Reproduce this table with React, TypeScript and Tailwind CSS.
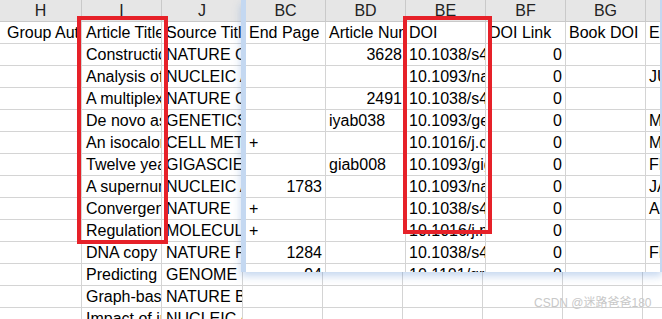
import React from 'react';

type Cell = { v: string; num?: boolean };

const BG_COLS = [82, 80, 81, 80, 80, 80, 80, 80, 80];
const BG_LETTERS = ['H', 'I', 'J', 'K', 'L', 'M', 'N', 'O', 'P'];

const BG_ROWS: string[][] = [
  ['Group Author', 'Article Title', 'Source Title'],
  ['', 'Construction of a high-density', 'NATURE COMMUNICATIONS'],
  ['', 'Analysis of', 'NUCLEIC ACIDS RESEARCH'],
  ['', 'A multiplexed', 'NATURE COMMUNICATIONS'],
  ['', 'De novo assembly', 'GENETICS'],
  ['', 'An isocaloric diet', 'CELL METABOLISM'],
  ['', 'Twelve years of', 'GIGASCIENCE'],
  ['', 'A supernumerary', 'NUCLEIC ACIDS RESEARCH'],
  ['', 'Convergent evolution', 'NATURE'],
  ['', 'Regulation of', 'MOLECULAR CELL'],
  ['', 'DNA copy number', 'NATURE PLANTS'],
  ['', 'Predicting', 'GENOME RESEARCH'],
  ['', 'Graph-based', 'NATURE BIOTECHNOLOGY'],
  ['', 'Impact of inbreeding', 'NUCLEIC ACIDS RESEARCH'],
];

const OV_COLS = [80, 80, 80, 80, 80, 80];
const OV_LETTERS = ['BC', 'BD', 'BE', 'BF', 'BG', 'BH'];

const n = (v: string): Cell => ({ v, num: true });
const t = (v: string): Cell => ({ v });

const OV_ROWS: Cell[][] = [
  [t('End Page'), t('Article Number'), t('DOI'), t('DOI Link'), t('Book DOI'), t('Early Access')],
  [t(''), n('3628'), t('10.1038/s41467-021'), n('0'), t(''), t('')],
  [t(''), t(''), t('10.1093/nar/gkab'), n('0'), t(''), t('JUN 2021')],
  [t(''), n('2491'), t('10.1038/s41467-021'), n('0'), t(''), t('')],
  [t(''), t('iyab038'), t('10.1093/genetics/iyab038'), n('0'), t(''), t('MAR 2021')],
  [t('+'), t(''), t('10.1016/j.cmet.2021'), n('0'), t(''), t('MAY 2021')],
  [t(''), t('giab008'), t('10.1093/gigascience/giab008'), n('0'), t(''), t('FEB 2021')],
  [n('1783'), t(''), t('10.1093/nar/gkaa'), n('0'), t(''), t('JAN 2021')],
  [t('+'), t(''), t('10.1038/s41586-021'), n('0'), t(''), t('APR 2021')],
  [t('+'), t(''), t('10.1016/j.molcel.2021'), n('0'), t(''), t('')],
  [n('1284'), t(''), t('10.1038/s41477-021'), n('0'), t(''), t('FEB 2021')],
  [n('94'), t(''), t('10.1101/gr.275'), n('0'), t(''), t('')],
];

const HeaderRow = ({ widths, letters }: { widths: number[]; letters: string[] }) => (
  <div className="flex h-[22px] bg-[#e6e6e6]">
    {widths.map((w, i) => (
      <div
        key={i}
        style={{ width: w }}
        className="shrink-0 h-full border-r border-b border-[#c9c9c9] text-center leading-[21px] text-[#222]"
      >
        {letters[i]}
      </div>
    ))}
  </div>
);

// back: the back sheet, whose first column starts a few px off screen
const Row = ({ widths, cells, back }: { widths: number[]; cells: Cell[]; back?: boolean }) => (
  <div className="flex h-[22px]">
    {widths.map((w, i) => {
      const c = cells[i] ?? { v: '' };
      const pad = back ? (i === 0 ? 'pl-[7px] pr-[3px]' : 'pl-[4px] pr-[3px]') : 'px-[3px]';
      return (
        <div
          key={i}
          style={{ width: w }}
          className={`shrink-0 h-full border-r border-b border-[#d4d4d4] ${pad} leading-[21px] whitespace-nowrap overflow-hidden text-black ${
            c.num ? 'text-right' : 'text-left'
          }`}
        >
          {c.v}
        </div>
      );
    })}
  </div>
);

export default function App() {
  return (
    <div
      className="relative w-[662px] h-[319px] overflow-hidden bg-white text-[16px]"
      style={{ fontFamily: '"Liberation Sans", Arial, sans-serif' }}
    >
      {/* background sheet */}
      <div className="flex flex-col">
        <HeaderRow widths={BG_COLS} letters={BG_LETTERS} />
        {BG_ROWS.map((r, i) => (
          <Row key={i} widths={BG_COLS} cells={r.map((v) => t(v))} back />
        ))}
      </div>

      {/* floating second window */}
      <div className="absolute left-[241px] top-0 w-[421px] h-[272px] overflow-hidden bg-white border-l-[5px] border-r-2 border-[#c4d8f1] shadow-[0_4px_8px_rgba(90,140,210,0.35)]">
        <HeaderRow widths={OV_COLS} letters={OV_LETTERS} />
        {OV_ROWS.map((r, i) => (
          <Row key={i} widths={OV_COLS} cells={r} />
        ))}
      </div>

      {/* highlight boxes */}
      <div className="absolute left-[77px] top-[16px] w-[91px] h-[228px] border-4 border-[#e62129]" />
      <div className="absolute left-[403px] top-[16px] w-[89px] h-[218px] border-4 border-[#e62129]" />

      <div
        className="absolute left-[534px] top-[296px] text-[12px] leading-[15px] text-[#c8c8c8] whitespace-nowrap"
        style={{ fontFamily: '"Liberation Sans", "Noto Sans CJK SC", sans-serif' }}
      >
        CSDN @迷路爸爸180
      </div>
    </div>
  );
}
